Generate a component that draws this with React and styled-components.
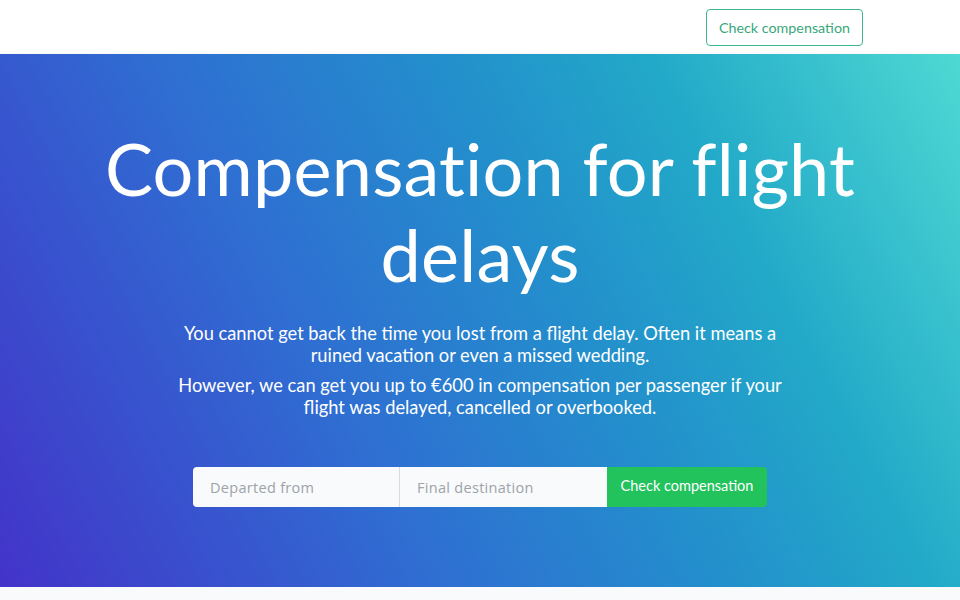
import React from "react";
import styled, { createGlobalStyle } from "styled-components";

const Global = createGlobalStyle`
  * { box-sizing: border-box; }
  body {
    margin: 0;
    background: #f8fafc;
    font-family: "Nunito", Lato, "Noto Sans", sans-serif;
  }
`;

const Container = styled.div`
  width: 768px;
  margin: 0 auto;
`;

const Header = styled.header`
  background: #fff;
  height: 54px;
`;

const HeaderInner = styled(Container)`
  height: 100%;
  display: flex;
  align-items: center;
  justify-content: flex-end;
`;

const OutlineButton = styled.button`
  height: 37px;
  padding: 0 12px;
  margin-right: 1px;
  border: 1px solid #3fb68c;
  border-radius: 4px;
  background: #fff;
  color: #38a77a;
  font-family: Lato, sans-serif;
  font-size: 14.3px;
`;

const Hero = styled.section`
  height: 533px;
  background: linear-gradient(62deg, #4333c9 0%, #2f6ed2 35%, #238fcc 58%, #22a9c8 75%, #4ed9d3 100%);
  box-shadow: 0 2px 6px rgba(0, 0, 0, 0.12);
  color: #fff;
  text-align: center;
`;

const HeroInner = styled(Container)`
  padding-top: 71px;
  display: flex;
  flex-direction: column;
  align-items: center;
`;

const Title = styled.h1`
  margin: 0;
  font-family: Lato, sans-serif;
  font-weight: 400;
  font-size: 72px;
  line-height: 86px;
  letter-spacing: 0.2px;
`;

const Lead = styled.p`
  margin: 0;
  max-width: 620px;
  font-family: Lato, sans-serif;
  font-size: 18.3px;
  line-height: 22px;
  & + & { margin-top: 8px; }
`;

const Intro = styled.div`
  margin-top: 25px;
  display: flex;
  flex-direction: column;
  align-items: center;
`;

const Form = styled.form`
  margin-top: 49px;
  display: flex;
  width: 574px;
  height: 40px;
  border-radius: 4px;
  overflow: hidden;
`;

const Field = styled.input`
  width: 207px;
  height: 100%;
  border: none;
  border-right: 1px solid #d8dce2;
  background: #f8fafc;
  padding: 0 17px;
  font-family: "Open Sans", sans-serif;
  font-size: 14.5px;
  color: #333;
  outline: none;
  &::placeholder { color: #9ea3a8; letter-spacing: 0.3px; }
  &:last-of-type { border-right: none; }
`;

const Submit = styled.button`
  flex: 1;
  border: none;
  background: #22c25c;
  color: #fff;
  font-family: Lato, sans-serif;
  font-size: 14.5px;
  padding-bottom: 4px;
`;

export default function App() {
  return (
    <>
      <Global />
      <Header>
        <HeaderInner>
          <OutlineButton>Check compensation</OutlineButton>
        </HeaderInner>
      </Header>
      <Hero>
        <HeroInner>
          <Title>Compensation for flight delays</Title>
          <Intro>
            <Lead>
              You cannot get back the time you lost from a flight delay. Often it means a ruined vacation or even a missed wedding.
            </Lead>
            <Lead>
              However, we can get you up to €600 in compensation per passenger if your flight was delayed, cancelled or overbooked.
            </Lead>
          </Intro>
          <Form onSubmit={(e) => e.preventDefault()}>
            <Field placeholder="Departed from" />
            <Field placeholder="Final destination" />
            <Submit>Check compensation</Submit>
          </Form>
        </HeroInner>
      </Hero>
    </>
  );
}
